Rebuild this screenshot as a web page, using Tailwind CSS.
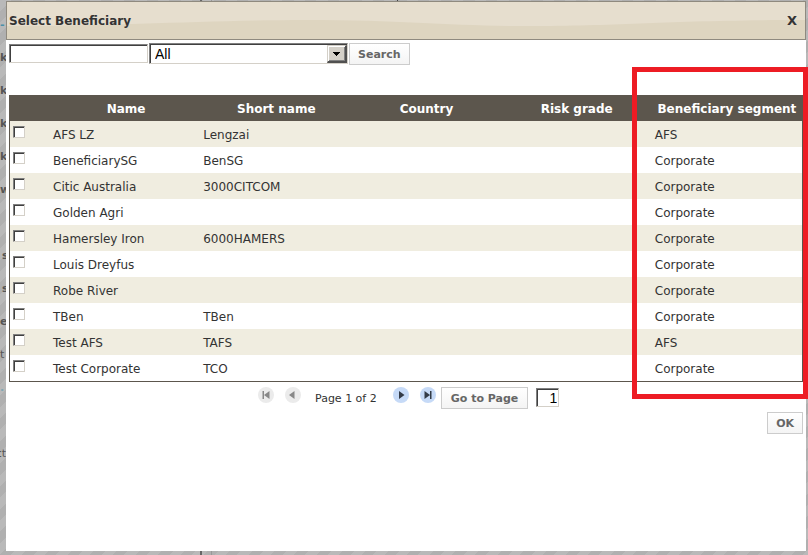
<!DOCTYPE html>
<html lang="en">
<head>
<meta charset="utf-8">
<title>Select Beneficiary</title>
<script src="https://cdn.jsdelivr.net/npm/@tailwindcss/browser@4"></script>
</head>
<body class="relative flex min-h-screen bg-[repeating-linear-gradient(135deg,#b9b9b9_0px,#b9b9b9_8px,#b0b0b0_8px,#b0b0b0_16px)] pt-px pr-0.5 pb-1 pl-1.5 font-['DejaVu_Sans',Verdana,sans-serif] text-[12px] text-[#333]">

<!-- Dimmed page behind the dialog -->
<div aria-hidden="true" class="absolute inset-0 overflow-hidden">
  <div class="absolute inset-y-0 left-[200px] w-0.5 bg-[#666]"></div>
  <div class="absolute inset-y-0 left-[211px] w-px bg-[#999]"></div>
  <div class="absolute top-0 left-[397px] h-1 w-px bg-[#444]"></div>
  <ul class="flex w-1.5 flex-col items-start pt-2 text-[11px] leading-[33px] font-bold whitespace-nowrap text-[#555]">
    <li class="h-[33px] text-[#4a90a8]">-</li>
    <li class="h-[33px]">k</li>
    <li class="h-[33px]">k</li>
    <li class="h-[33px]">k</li>
    <li class="h-[33px]">k</li>
    <li class="h-[33px]">w</li>
    <li class="h-[33px]"></li>
    <li class="h-[33px] pl-0.5">s</li>
    <li class="h-[33px] pl-0.5">s</li>
    <li class="h-[33px]">e</li>
    <li class="h-[33px] font-normal">t</li>
    <li class="h-[33px] text-[#7fa8b4]">.</li>
    <li class="h-[33px]"></li>
    <li class="h-[33px] self-end font-normal">ct</li>
  </ul>
</div>

<main role="dialog" aria-labelledby="title" class="relative flex-1 bg-white">
  <header class="relative flex h-[39px] items-center justify-between overflow-hidden border border-[#8f8a7f] bg-[#ded5c0] pr-2 pl-0.5">
    <svg class="absolute inset-0 size-full" viewBox="0 0 798 37" preserveAspectRatio="none" aria-hidden="true">
      <path d="M0 0H798V18C660 18 620 24 520 24C440 24 400 18 300 18C200 18 120 24 0 24Z" fill="#e6dece"/>
    </svg>
    <h1 id="title" class="relative text-[12px] font-bold">Select Beneficiary</h1>
    <button type="button" aria-label="Close" class="relative text-[13px] leading-4 font-bold">X</button>
  </header>

  <div class="px-[3px]">
    <form class="flex h-[55px] items-start gap-px pt-[3px]">
      <input type="text" aria-label="Search text" class="mt-px h-[19px] w-[139px] border border-t-[#808080] border-r-[#d4d0c8] border-b-[#d4d0c8] border-l-[#808080] bg-white px-1 font-['Liberation_Sans',Arial,sans-serif] text-sm shadow-[inset_1px_1px_0_#404040] outline-none">
      <div class="relative">
        <select aria-label="Filter" class="block h-[21px] w-[199px] appearance-none border border-t-[#808080] border-r-[#d4d0c8] border-b-[#d4d0c8] border-l-[#808080] bg-white pt-px pl-[5px] font-['Liberation_Sans',Arial,sans-serif] text-sm leading-[18px] text-black shadow-[inset_1px_1px_0_#404040] outline-none"><option>All</option></select>
        <span aria-hidden="true" class="pointer-events-none absolute top-0.5 right-px flex h-[18px] w-5 items-center justify-center border-t border-r-2 border-b-2 border-l border-t-[#d4d0c8] border-r-[#505050] border-b-[#505050] border-l-[#d4d0c8] bg-[#d4d0c8] shadow-[inset_1px_1px_0_#fff,inset_-1px_-1px_0_#808080]">
          <svg width="7" height="4" viewBox="0 0 7 4" shape-rendering="crispEdges"><path d="M0 0H7L3.500 4Z"/></svg>
        </span>
      </div>
      <button type="button" class="h-[22px] border border-[#ccc] bg-linear-to-b from-white to-[#f4f4f4] px-2 pt-0.5 text-[11px] font-bold text-[#666]">Search</button>
    </form>

    <table class="w-full table-fixed border-separate border-spacing-0 border border-[#5c564d]">
      <colgroup><col class="w-[41px]"><col><col><col><col><col></colgroup>
      <thead class="bg-[#5c564d] text-white">
        <tr class="h-[25px]"><th class="p-0"></th><th class="p-0">Name</th><th class="p-0">Short name</th><th class="p-0">Country</th><th class="p-0">Risk grade</th><th class="p-0">Beneficiary segment</th></tr>
      </thead>
      <tbody id="rows"></tbody>
    </table>

    <nav aria-label="Pages" class="flex h-[27px] items-end pl-[249px] text-[11px]">
      <button type="button" aria-label="First page" class="mb-1.5"><svg width="16" height="16" viewBox="0 0 16 16"><circle cx="8" cy="8" r="8" fill="#ebebeb"/><path d="M4.500 4H6V12H4.500ZM11.500 4V12L6 8Z" fill="#888"/></svg></button>
      <button type="button" aria-label="Previous page" class="mb-1.5 ml-[11px]"><svg width="16" height="16" viewBox="0 0 16 16"><circle cx="8" cy="8" r="8" fill="#ebebeb"/><path d="M9.500 4V12L4 8Z" fill="#888"/></svg></button>
      <span class="ml-3.5 h-[18px] leading-4">Page 1 of 2</span>
      <button type="button" aria-label="Next page" class="mb-1.5 ml-4"><svg width="16" height="16" viewBox="0 0 16 16"><circle cx="8" cy="8" r="8" fill="#c6daf7"/><path d="M6 4V12L11.500 8Z" fill="#333b47"/></svg></button>
      <button type="button" aria-label="Last page" class="mb-1.5 ml-[11px]"><svg width="16" height="16" viewBox="0 0 16 16"><circle cx="8" cy="8" r="8" fill="#c6daf7"/><path d="M4.500 4V12L10 8ZM10 4H11.500V12H10Z" fill="#333b47"/></svg></button>
      <button type="button" class="ml-[5px] h-[22px] border border-[#ccc] bg-linear-to-b from-white to-[#f4f4f4] px-[9px] pt-0.5 font-bold whitespace-nowrap text-[#666]">Go to Page</button>
      <input type="text" aria-label="Page number" value="1" class="mb-0.5 ml-2 h-[19px] w-[23px] border border-t-[#808080] border-r-[#d4d0c8] border-b-[#d4d0c8] border-l-[#808080] bg-white pr-px text-right font-['Liberation_Sans',Arial,sans-serif] text-sm text-black shadow-[inset_1px_1px_0_#404040] outline-none">
    </nav>

    <div class="flex justify-end pt-[3px]">
      <button type="button" class="h-[22px] border border-[#ccc] bg-linear-to-b from-white to-[#f4f4f4] px-2 pt-0.5 text-[11px] font-bold text-[#666]">OK</button>
    </div>
  </div>
</main>

<!-- Highlight around the segment column -->
<div aria-hidden="true" class="pointer-events-none absolute top-[67px] right-0 h-[332px] w-44 border-5 border-[#ed1c24]"></div>

<script>
const data = [
  ['AFS LZ', 'Lengzai', 'AFS'],
  ['BeneficiarySG', 'BenSG', 'Corporate'],
  ['Citic Australia', '3000CITCOM', 'Corporate'],
  ['Golden Agri', '', 'Corporate'],
  ['Hamersley Iron', '6000HAMERS', 'Corporate'],
  ['Louis Dreyfus', '', 'Corporate'],
  ['Robe River', '', 'Corporate'],
  ['TBen', 'TBen', 'Corporate'],
  ['Test AFS', 'TAFS', 'AFS'],
  ['Test Corporate', 'TCO', 'Corporate'],
];
document.getElementById('rows').innerHTML = data.map(([name, short, segment]) => `
  <tr class="h-[26px] odd:bg-[#f0ede0]">
    <td class="p-0 pt-[5px] pl-[3px] align-top"><input type="checkbox" aria-label="${name}" class="block size-3 appearance-none border border-t-[#808080] border-r-[#d4d0c8] border-b-[#d4d0c8] border-l-[#808080] bg-white shadow-[inset_1px_1px_0_#404040]"></td>
    <td class="pt-0.5 pr-0 pb-0 pl-0.5">${name}</td>
    <td class="pt-0.5 pr-0 pb-0 pl-0.5">${short}</td>
    <td class="p-0"></td>
    <td class="p-0"></td>
    <td class="pt-0.5 pr-0 pb-0 pl-[3px]">${segment}</td>
  </tr>`).join('');
</script>
</body>
</html>
